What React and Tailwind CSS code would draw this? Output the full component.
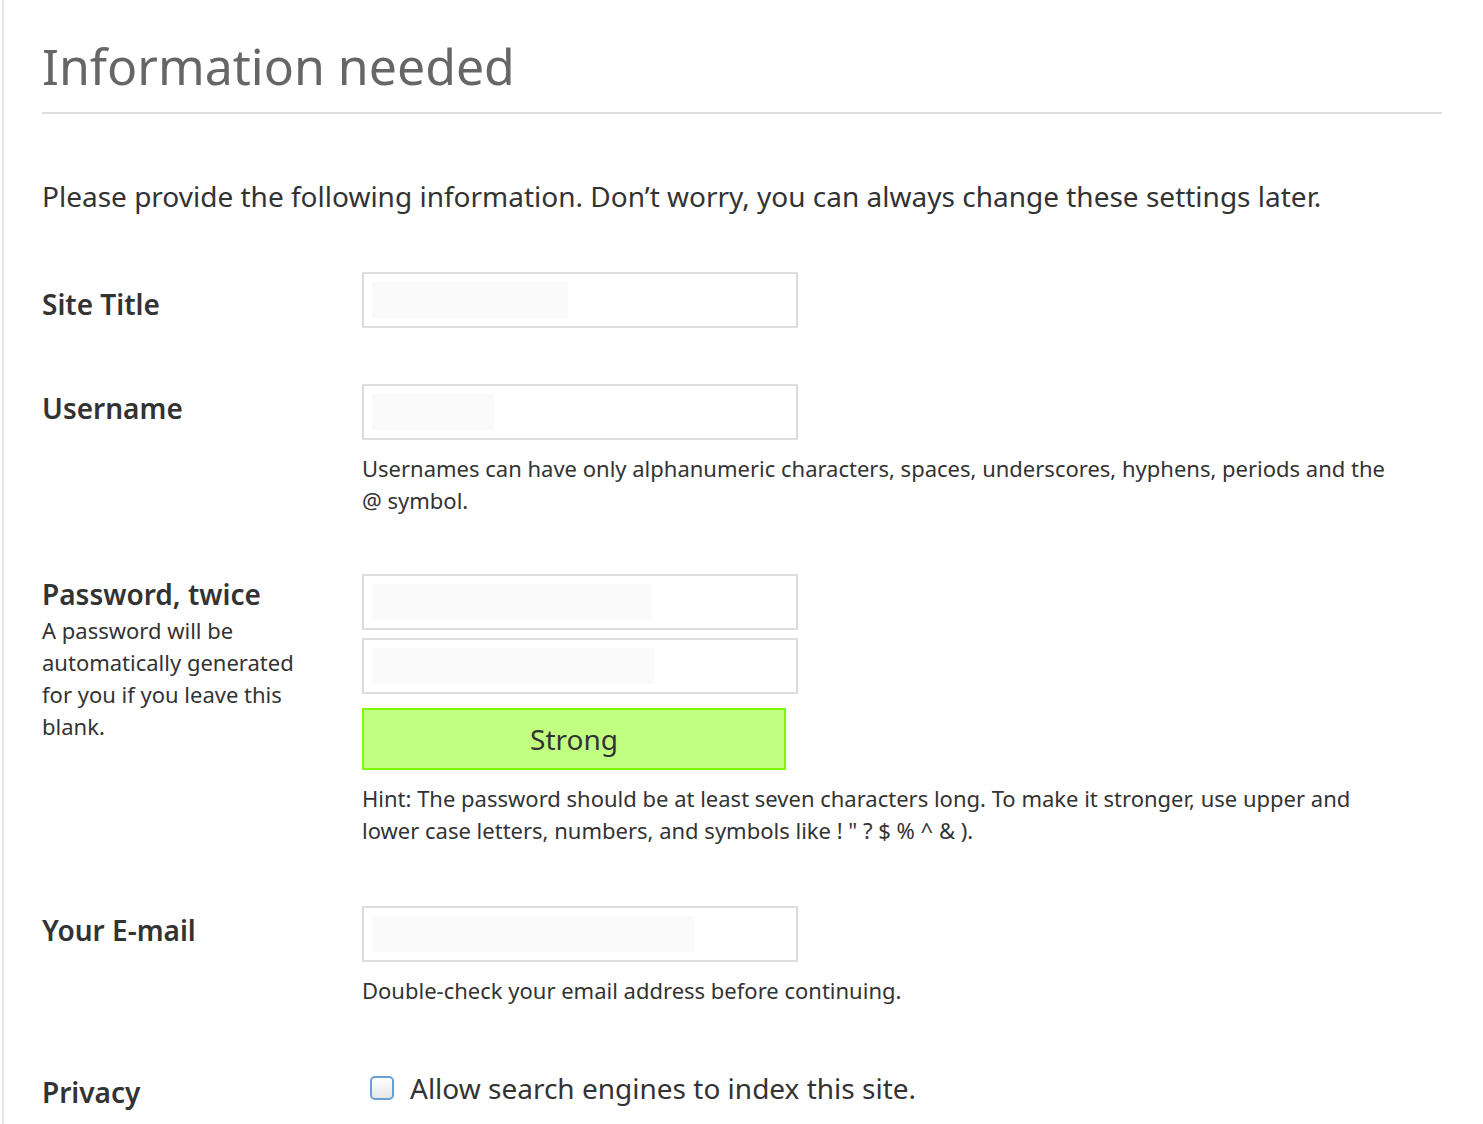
const Field = ({ fill = 205 }) => (
  <div className="relative h-[56px] w-[436px] border-2 border-[#dddddd] bg-white">
    <div className="absolute left-[8px] top-[8px] h-[36px] bg-[#fafafa]" style={{ width: fill }} />
  </div>
);

const Help = ({ children }) => (
  <p className="mt-[12px] text-[22px] leading-[32px] text-[#333333]">{children}</p>
);

export default function App() {
  return (
    <div className="min-h-[1124px] bg-white font-['Open_Sans',sans-serif] text-[#333333]">
      <div className="ml-[2px] min-h-[1124px] border-l-2 border-[#e5e5e5] pl-[38px] pr-[40px]">
        <h1 className="pt-[32px] text-[50px] font-normal leading-[68px] text-[#666666]">Information needed</h1>
        <div className="mt-[12px] h-[2px] w-[1400px] bg-[#dddddd]" />
        <p className="mt-[62px] text-[28px] leading-[40px]">
          Please provide the following information. Don’t worry, you can always change these settings later.
        </p>

        <div className="mt-[56px] flex">
          <div className="w-[320px] pt-[12px] text-[28px] font-semibold leading-[40px]">Site Title</div>
          <Field fill={196} />
        </div>

        <div className="mt-[56px] flex">
          <div className="w-[320px] pt-[4px] text-[28px] font-semibold leading-[40px]">Username</div>
          <div className="w-[1040px]">
            <Field fill={122} />
            <Help>Usernames can have only alphanumeric characters, spaces, underscores, hyphens, periods and the @ symbol.</Help>
          </div>
        </div>

        <div className="mt-[58px] flex">
          <div className="w-[320px]">
            <div className="text-[28px] font-semibold leading-[40px]">Password, twice</div>
            <p className="w-[260px] text-[22px] leading-[32px]">A password will be automatically generated for you if you leave this blank.</p>
          </div>
          <div className="w-[1040px]">
            <Field fill={280} />
            <div className="mt-[8px]"><Field fill={283} /></div>
            <div className="mt-[14px] flex h-[62px] w-[424px] items-center justify-center border-2 border-[#7ff900] bg-[#c1ff80] text-[28px] text-[#333333]">Strong</div>
            <Help>Hint: The password should be at least seven characters long. To make it stronger, use upper and lower case letters, numbers, and symbols like ! " ? $ % ^ &amp; ).</Help>
          </div>
        </div>

        <div className="mt-[60px] flex">
          <div className="w-[320px] pt-[4px] text-[28px] font-semibold leading-[40px]">Your E-mail</div>
          <div className="w-[1040px]">
            <Field fill={323} />
            <Help>Double-check your email address before continuing.</Help>
          </div>
        </div>

        <div className="mt-[58px] flex items-center">
          <div className="w-[320px] pt-[8px] text-[28px] font-semibold leading-[40px]">Privacy</div>
          <label className="flex items-center pl-[8px] text-[28px] leading-[40px]">
            <span className="mr-[16px] h-[24px] w-[24px] rounded-[5px] border-2 border-[#6a9fd8] bg-gradient-to-b from-white to-[#e6e6e6]" />
            Allow search engines to index this site.
          </label>
        </div>
      </div>
    </div>
  );
}
